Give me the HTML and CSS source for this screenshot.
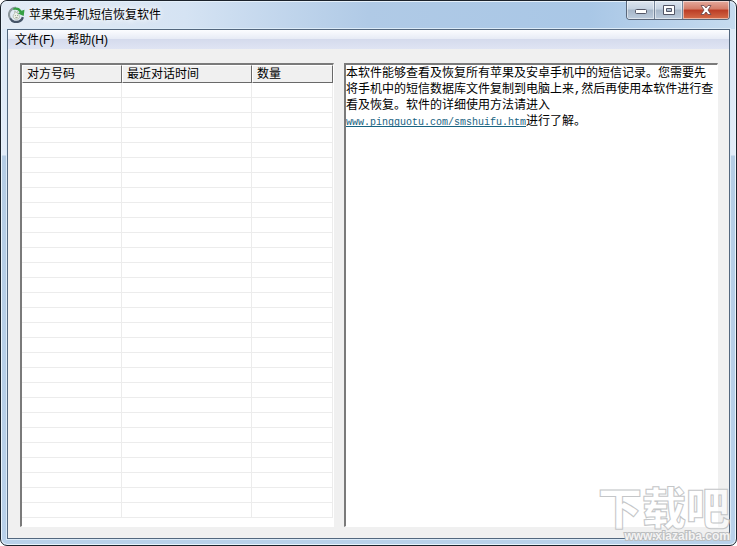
FILE: index.html
```
<!DOCTYPE html>
<html lang="zh-CN">
<head>
    <meta charset="UTF-8" />
    <meta name="viewport" content="width=device-width, initial-scale=1.0" />
    <title>苹果兔手机短信恢复软件</title>
    <link rel="stylesheet" href="styles.css">
</head>
<body>
    <div class="window">
        <header class="titlebar">
            <svg class="app-icon" viewBox="0 0 16 16" aria-hidden="true">
                <path d="M7.5 1.8A6.3 6.3 0 0 0 2 11.500" fill="none" stroke="#8b969b" stroke-width="2" />
                <path d="M2 11.500A6.500 6.500 0 0 0 14 10.500" fill="none" stroke="#465568" stroke-width="2.200" />
                <path d="M5 2.200C8 .5 11 1.500 12.700 4.500L15.500 3.500 14.800 9.500 9.300 7 11 5.800C9.500 3.500 7.500 3 5 3.800Z" fill="#35a044" />
                <path d="M6.200 7L6.500 4.500 7.700 6.500 9.200 4.800 9 7.500C11.500 9 11.500 12.500 8 12.500S4 9 6.200 7Z" fill="#eef1e9" stroke="#9da99b" stroke-width=".6" />
                <path d="M6.500 9h.8M8.500 9h.8M7 11h2" stroke="#798775" stroke-width=".8" />
            </svg>
            <h1 class="title">苹果兔手机短信恢复软件</h1>
            <div class="controls">
                <button class="control" aria-label="最小化">
                    <svg width="14" height="12" viewBox="0 0 14 12"><rect x="1.500" y="5.500" width="11" height="4" rx="1" fill="#fff" stroke="#535666" /></svg>
                </button>
                <button class="control" aria-label="最大化">
                    <svg width="14" height="12" viewBox="0 0 14 12"><path fill-rule="evenodd" d="M1.500 1.500h11v9h-11zM4.500 4.500h5v3h-5z" fill="#fff" stroke="#535666" /></svg>
                </button>
                <button class="control close" aria-label="关闭">
                    <svg width="14" height="12" viewBox="0 0 14 12"><path d="M2 1.500h3l2 2.500 2-2.500h3L9 6l3 4.500H9L7 8l-2 2.500H2L5 6z" fill="#fff" stroke="#65434a" stroke-width=".8" /></svg>
                </button>
            </div>
        </header>

        <div class="client">
            <nav class="menubar">
                <button class="menu-item">文件(F)</button>
                <button class="menu-item">帮助(H)</button>
            </nav>

            <main class="content">
                <section class="panel list">
                    <table class="grid">
                        <colgroup>
                            <col class="col-number">
                            <col class="col-time">
                            <col class="col-count">
                        </colgroup>
                        <thead>
                            <tr><th>对方号码</th><th>最近对话时间</th><th>数量</th></tr>
                        </thead>
                        <tbody>
                            <tr><td></td><td></td><td></td></tr>
                            <tr><td></td><td></td><td></td></tr>
                            <tr><td></td><td></td><td></td></tr>
                            <tr><td></td><td></td><td></td></tr>
                            <tr><td></td><td></td><td></td></tr>
                            <tr><td></td><td></td><td></td></tr>
                            <tr><td></td><td></td><td></td></tr>
                            <tr><td></td><td></td><td></td></tr>
                            <tr><td></td><td></td><td></td></tr>
                            <tr><td></td><td></td><td></td></tr>
                            <tr><td></td><td></td><td></td></tr>
                            <tr><td></td><td></td><td></td></tr>
                            <tr><td></td><td></td><td></td></tr>
                            <tr><td></td><td></td><td></td></tr>
                            <tr><td></td><td></td><td></td></tr>
                            <tr><td></td><td></td><td></td></tr>
                            <tr><td></td><td></td><td></td></tr>
                            <tr><td></td><td></td><td></td></tr>
                            <tr><td></td><td></td><td></td></tr>
                            <tr><td></td><td></td><td></td></tr>
                            <tr><td></td><td></td><td></td></tr>
                            <tr><td></td><td></td><td></td></tr>
                            <tr><td></td><td></td><td></td></tr>
                            <tr><td></td><td></td><td></td></tr>
                            <tr><td></td><td></td><td></td></tr>
                            <tr><td></td><td></td><td></td></tr>
                            <tr><td></td><td></td><td></td></tr>
                            <tr><td></td><td></td><td></td></tr>
                            <tr><td></td><td></td><td></td></tr>
                        </tbody>
                    </table>
                </section>

                <section class="panel message">
                    <p>本软件能够查看及恢复所有苹果及安卓手机中的短信记录。您需要先将手机中的短信数据库文件复制到电脑上来,然后再使用本软件进行查看及恢复。软件的详细使用方法请进入<a class="link" href="http://www.pingguotu.com/smshuifu.htm">www.pingguotu.com/smshuifu.htm</a>进行了解。</p>
                </section>
            </main>
        </div>

        <div class="watermark">
            <span class="watermark-name">下载吧</span>
            <span class="watermark-url">www.xiazaiba.com</span>
        </div>
    </div>
</body>
</html>
```

FILE: styles.css
```
* {
    box-sizing: border-box;
}

html, body {
    height: 100%;
    margin: 0;
    background: #fff;
    font-family: "Liberation Sans", "Noto Sans CJK SC", sans-serif;
    font-size: 12px;
    color: #000;
}

button {
    margin: 0;
    padding: 0;
    border: 0;
    background: none;
    font: inherit;
    color: inherit;
}

.window {
    position: relative;
    display: flex;
    flex-direction: column;
    height: 100vh;
    padding: 0 6px 6px;
    border: 1px solid #1b222b;
    border-radius: 7px;
    background: linear-gradient(#dce8f6 0, #e2ecf8 154px, #b5cde5 155px, #b9d1ea 100%);
    box-shadow: inset 0 0 0 1px #e9f4fc;
    overflow: hidden;
}

.titlebar {
    display: flex;
    flex: none;
    align-items: flex-start;
    height: 28px;
    margin: 0 -5px;
    padding: 0 5px 0 6px;
    background: linear-gradient(90deg, #e3ebf5 0, #d5e3f3 25%, #b0cae6 50%, #a9c7e6 80%, #c6dbef 100%);
    border-radius: 6px 6px 0 0;
    box-shadow: inset 0 1px 0 #e5f0fa;
}

.app-icon {
    width: 17px;
    height: 17px;
    margin-top: 5px;
}

.title {
    flex: 1;
    margin: 5px 0 0 4px;
    font-size: 12px;
    font-weight: normal;
    line-height: 18px;
    text-shadow: 0 0 6px #fff, 0 0 6px #fff;
}

.controls {
    display: flex;
    height: 19px;
    border: 1px solid #59677b;
    border-top: 0;
    border-radius: 0 0 4px 4px;
    overflow: hidden;
}

.control {
    display: flex;
    align-items: center;
    justify-content: center;
    width: 28px;
    border-right: 1px solid #75859a;
    background: linear-gradient(#dce5ef 0, #c5d2e1 45%, #a6b6c8 50%, #bccbdc 100%);
    box-shadow: inset 0 0 0 1px rgba(255, 255, 255, 0.5);
}

.close {
    width: 46px;
    border-right: 0;
    background: linear-gradient(#e4aa9d 0, #d37c68 45%, #bb3c25 50%, #d56c49 100%);
}

.client {
    display: flex;
    flex: 1;
    flex-direction: column;
    min-height: 0;
    border: 1px solid #53677e;
    background: #f0f0f0;
    box-shadow: 0 0 0 1px #dcebf8;
}

.menubar {
    display: flex;
    flex: none;
    gap: 13px;
    height: 19px;
    padding: 0 7px;
    background: linear-gradient(#fcfdff 0, #e8ecf6 45%, #d5dbed 50%, #dfe4f3 100%);
}

.menu-item {
    line-height: 20px;
}

.content {
    display: grid;
    flex: 1;
    grid-template-columns: 314fr 374fr;
    gap: 10px;
    min-height: 0;
    padding: 14px 11px 11px 12px;
}

.panel {
    min-width: 0;
    border: 1px solid #fff;
    border-top: 2px solid #7a7a7a;
    border-left: 2px solid #7a7a7a;
    background: #fff;
    overflow: hidden;
}

.grid {
    width: 100%;
    table-layout: fixed;
    border-collapse: separate;
    border-spacing: 0;
}

.col-number {
    width: 100px;
}

.col-time {
    width: 130px;
}

.grid th {
    height: 18px;
    padding: 0 0 0 4px;
    border-top: 1px solid #fff;
    border-left: 1px solid #fff;
    border-right: 1px solid #696969;
    border-bottom: 1px solid #696969;
    background: #f0f0f0;
    font-weight: normal;
    line-height: 16px;
    text-align: left;
}

.grid td {
    height: 15px;
    padding: 0;
    border-right: 1px solid #ececec;
    border-bottom: 1px solid #ececec;
}

.message p {
    margin: 0;
    padding: 1px 0;
    font-family: "Liberation Mono", "Noto Sans CJK SC", monospace;
    line-height: 16px;
}

.link {
    font-size: 10px;
    color: #176382;
    text-decoration-skip-ink: none;
    white-space: nowrap;
}

/* site mark laid over the corner of the window */
.watermark {
    position: absolute;
    right: 6px;
    bottom: 3px;
    display: flex;
    flex-direction: column;
    align-items: flex-end;
    pointer-events: none;
}

.watermark-name {
    color: rgba(255, 255, 255, 0.6);
    font-family: "Noto Sans CJK SC", sans-serif;
    font-size: 44px;
    font-weight: 900;
    line-height: 48px;
    -webkit-text-stroke: 1px #c4c6c8;
}

.watermark-url {
    color: #f4f4f4;
    font-size: 12px;
    font-weight: bold;
    line-height: 12px;
    -webkit-text-stroke: 2px #bcbec0;
    paint-order: stroke;
}
```
